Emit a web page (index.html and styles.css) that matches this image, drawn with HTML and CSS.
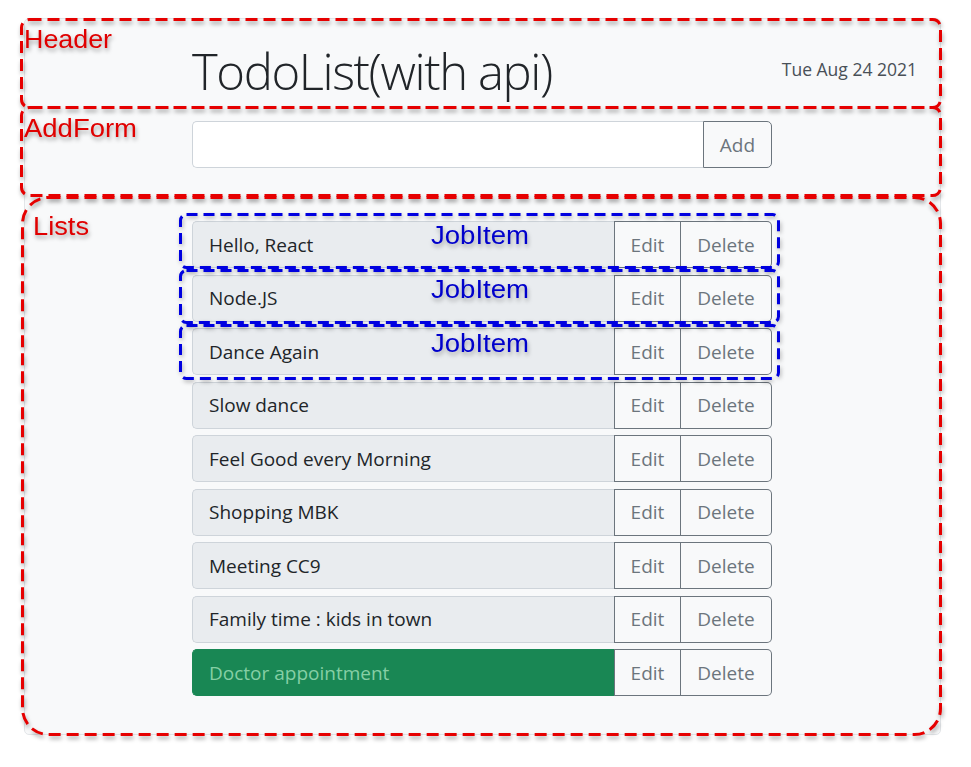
FILE: index.html
```html
<!DOCTYPE html>
<html lang="en">
<head>
<meta charset="utf-8">
<title>TodoList</title>
<link rel="stylesheet" href="styles.css">
</head>
<body>
<div class="page">
  <div class="card">
    <header class="header">
      <h1 class="title">TodoList(with api)</h1>
      <div class="date">Tue Aug 24 2021</div>
    </header>
    <form class="add-form">
      <input class="add-input" type="text">
      <button class="btn add-btn" type="button">Add</button>
    </form>
    <ul class="lists">
      <li class="job"><span class="job-text">Hello, React</span><button class="btn edit" type="button">Edit</button><button class="btn del" type="button">Delete</button></li>
      <li class="job"><span class="job-text">Node.JS</span><button class="btn edit" type="button">Edit</button><button class="btn del" type="button">Delete</button></li>
      <li class="job"><span class="job-text">Dance Again</span><button class="btn edit" type="button">Edit</button><button class="btn del" type="button">Delete</button></li>
      <li class="job"><span class="job-text">Slow dance</span><button class="btn edit" type="button">Edit</button><button class="btn del" type="button">Delete</button></li>
      <li class="job"><span class="job-text">Feel Good every Morning</span><button class="btn edit" type="button">Edit</button><button class="btn del" type="button">Delete</button></li>
      <li class="job"><span class="job-text">Shopping MBK</span><button class="btn edit" type="button">Edit</button><button class="btn del" type="button">Delete</button></li>
      <li class="job"><span class="job-text">Meeting CC9</span><button class="btn edit" type="button">Edit</button><button class="btn del" type="button">Delete</button></li>
      <li class="job"><span class="job-text">Family time : kids in town</span><button class="btn edit" type="button">Edit</button><button class="btn del" type="button">Delete</button></li>
      <li class="job done"><span class="job-text">Doctor appointment</span><button class="btn edit" type="button">Edit</button><button class="btn del" type="button">Delete</button></li>
    </ul>
  </div>

  <svg class="notes" width="971" height="767" viewBox="0 0 971 767" xmlns="http://www.w3.org/2000/svg">
    <g class="red-lines" fill="none" stroke="#e60000" stroke-width="3" stroke-dasharray="12 6">
      <rect x="21.5" y="19.5" width="919" height="88" rx="8"/>
      <rect x="21.5" y="107.5" width="919" height="88" rx="8"/>
      <rect x="22.5" y="197.5" width="918" height="537" rx="26"/>
    </g>
    <g class="blue-lines" fill="none" stroke="#0000e0" stroke-width="3" stroke-dasharray="11 6">
      <rect x="180.5" y="214.5" width="598" height="53" rx="6"/>
      <rect x="180.5" y="270.5" width="598" height="52" rx="6"/>
      <rect x="180.5" y="325.5" width="598" height="53" rx="6"/>
    </g>
    <g class="red-text">
      <text x="24" y="48" textLength="88" lengthAdjust="spacingAndGlyphs">Header</text>
      <text x="24" y="137" textLength="113" lengthAdjust="spacingAndGlyphs">AddForm</text>
      <text x="33" y="235" textLength="56" lengthAdjust="spacingAndGlyphs">Lists</text>
    </g>
    <g class="blue-text">
      <text x="431" y="244" textLength="98" lengthAdjust="spacingAndGlyphs">JobItem</text>
      <text x="431" y="298" textLength="98" lengthAdjust="spacingAndGlyphs">JobItem</text>
      <text x="431" y="352" textLength="98" lengthAdjust="spacingAndGlyphs">JobItem</text>
    </g>
  </svg>
</div>
</body>
</html>
```
FILE: styles.css
```css
* { box-sizing: border-box; }

html, body {
  margin: 0;
  padding: 0;
  background: #ffffff;
}

body {
  font-family: "Open Sans", "Noto Sans", sans-serif;
  color: #212529;
}

.page {
  position: relative;
  width: 971px;
  height: 767px;
  overflow: hidden;
}

.card {
  margin: 18px 0 0 24px;
  width: 917px;
  height: 717px;
  background: #f8f9fa;
  border: 1px solid #e3e6e9;
  border-radius: 5px;
  padding: 22px 23px 0 167px;
}

.header {
  display: flex;
  align-items: center;
  justify-content: space-between;
  height: 60px;
}

.title {
  margin: 0;
  font-family: "Open Sans", sans-serif;
  font-weight: 300;
  font-size: 49px;
  line-height: 60px;
  letter-spacing: -1.4px;
  color: #212529;
}

.date {
  font-size: 17.5px;
  color: #495057;
  margin-top: -4px;
}

.add-form {
  display: flex;
  width: 580px;
  height: 47px;
  margin-top: 20px;
}

.add-input {
  flex: 1;
  height: 47px;
  border: 1px solid #ced4da;
  border-right: none;
  border-radius: 5px 0 0 5px;
  background: #ffffff;
  font-size: 19px;
  padding: 0 16px;
  margin: 0;
  outline: none;
}

.btn {
  margin: 0;
  font-family: "Open Sans", sans-serif;
  font-size: 19px;
  color: #6c757d;
  background: #f8f9fa;
  border: 1px solid #6c757d;
  padding: 0;
  cursor: pointer;
}

.add-btn {
  width: 69px;
  height: 47px;
  border-radius: 0 5px 5px 0;
}

.lists {
  list-style: none;
  margin: 53px 0 0 0;
  padding: 0;
  width: 580px;
  display: flex;
  flex-direction: column;
  gap: 6.5px;
}

.job {
  display: flex;
  height: 47px;
}

.job-text {
  flex: 1;
  display: flex;
  align-items: center;
  padding-left: 16px;
  font-size: 19px;
  background: #e9ecef;
  border: 1px solid #ced4da;
  border-right: none;
  border-radius: 5px 0 0 5px;
  color: #212529;
}

.edit {
  width: 67px;
  border-radius: 0;
}

.del {
  width: 91px;
  border-left: none;
  border-radius: 0 5px 5px 0;
}

.done .job-text {
  background: #198754;
  border-color: #198754;
  color: #86cfa5;
}

.notes {
  position: absolute;
  left: 0;
  top: 0;
  pointer-events: none;
}

.red-lines {
  filter: drop-shadow(1px 3px 2px rgba(0, 0, 0, 0.35));
}

.blue-lines {
  filter: drop-shadow(1px 2px 2px rgba(0, 0, 0, 0.3));
}

.red-text text {
  font-family: "Liberation Sans", Arial, sans-serif;
  font-size: 25px;
  fill: #e00000;
}

.red-text {
  filter: drop-shadow(1px 3px 2px rgba(0, 0, 0, 0.35));
}

.blue-text text {
  font-family: "Liberation Sans", Arial, sans-serif;
  font-size: 26px;
  fill: #0000cc;
}

.blue-text {
  filter: drop-shadow(1px 3px 2px rgba(0, 0, 0, 0.3));
}
```
